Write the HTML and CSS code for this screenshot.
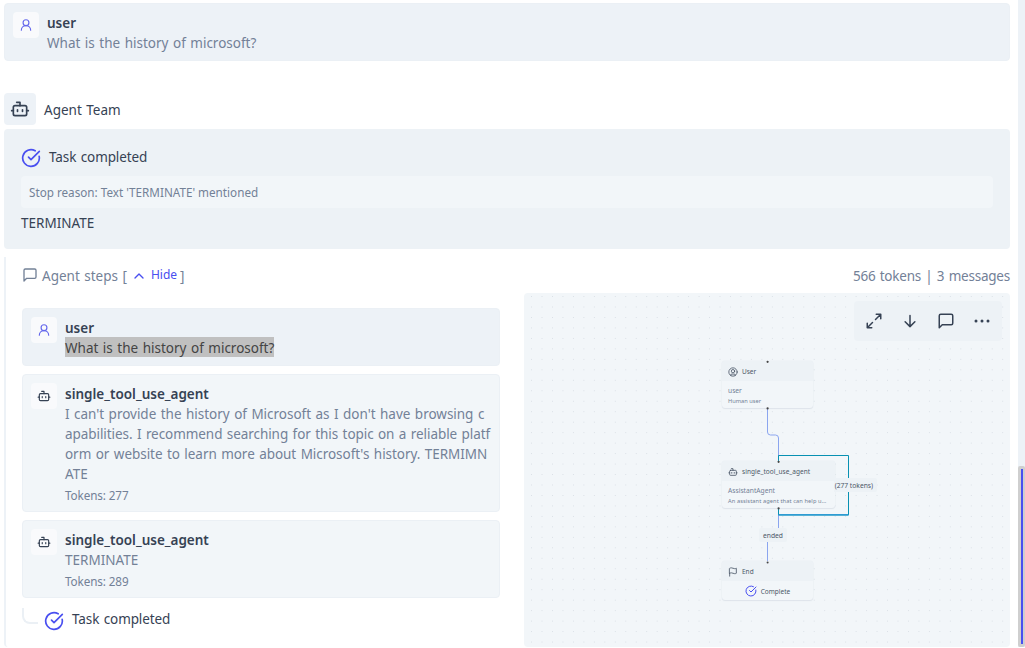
FILE: index.html
```html
<!DOCTYPE html>
<html lang="en">
<head>
<meta charset="utf-8">
<title>Agent Team</title>
<link rel="stylesheet" href="styles.css">
</head>
<body>
<svg class="defs" aria-hidden="true">
  <symbol id="bot" viewBox="0 0 24 24"><path d="M12 8V4H8"/><rect x="4" y="8" width="16" height="12" rx="2"/><path d="M2 14h2M20 14h2M15 13v2M9 13v2"/></symbol>
  <symbol id="person" viewBox="0 0 24 24"><circle cx="12" cy="8" r="5"/><path d="M20 21a8 8 0 0 0-16 0"/></symbol>
  <symbol id="done" viewBox="0 0 24 24"><path d="M21.8 10A10 10 0 1 1 17 3.34"/><path d="m9 11 3 3L22 4"/></symbol>
  <symbol id="message" viewBox="0 0 24 24"><path d="M21 15a2 2 0 0 1-2 2H7l-4 4V5a2 2 0 0 1 2-2h14a2 2 0 0 1 2 2z"/></symbol>
  <symbol id="flag" viewBox="0 0 24 24"><path d="M4 15s1-1 4-1 5 2 8 2 4-1 4-1V3s-1 1-4 1-5-2-8-2-4 1-4 1zM4 22v-7"/></symbol>
</svg>
<div class="page">
  <main class="chat">
    <section class="message message-user">
      <span class="avatar avatar-user"><svg class="icon icon-16"><use href="#person"/></svg></span>
      <div class="body"><div class="name">user</div><div class="text"><span class="question">What is the history of microsoft?</span></div></div>
    </section>
    <header class="team"><span class="team-icon"><svg class="icon icon-20"><use href="#bot"/></svg></span><span class="team-name">Agent Team</span></header>
    <section class="result">
      <div class="status"><svg class="icon icon-20 accent"><use href="#done"/></svg><span class="completed">Task completed</span></div>
      <div class="reason"><span class="reason-text">Stop reason: Text 'TERMINATE' mentioned</span></div>
      <div class="final"><span class="terminate">TERMINATE</span></div>
    </section>
    <section class="steps">
      <div class="steps-head">
        <svg class="icon icon-16"><use href="#message"/></svg>
        <span class="steps-title">Agent steps [</span>
        <svg class="icon chevron accent" viewBox="0 0 24 24"><path d="m18 15-6-6-6 6"/></svg>
        <span class="hide">Hide</span><span class="bracket">]</span>
        <span class="totals">566 tokens | 3 messages</span>
      </div>
      <div class="columns">
        <div class="list">
          <article class="message message-user">
            <span class="avatar avatar-user"><svg class="icon icon-16"><use href="#person"/></svg></span>
            <div class="body"><div class="name">user</div><div class="text"><span class="question selected">What is the history of microsoft?</span></div></div>
          </article>
          <article class="message">
            <span class="avatar"><svg class="icon icon-16"><use href="#bot"/></svg></span>
            <div class="body"><div class="name agent-name">single_tool_use_agent</div>
              <div class="text"><span class="line-a">I can't provide the history of Microsoft as I don't have browsing c</span><br><span class="line-b">apabilities. I recommend searching for this topic on a reliable platf</span><br><span class="line-c">orm or website to learn more about Microsoft's history. TERMIMN</span><br><span class="line-d">ATE</span></div>
              <div class="tokens">Tokens: 277</div></div>
          </article>
          <article class="message">
            <span class="avatar"><svg class="icon icon-16"><use href="#bot"/></svg></span>
            <div class="body"><div class="name agent-name">single_tool_use_agent</div><div class="text"><span class="terminate">TERMINATE</span></div><div class="tokens">Tokens: 289</div></div>
          </article>
          <div class="ending"><span class="elbow"></span><svg class="icon icon-20 accent"><use href="#done"/></svg><span class="completed">Task completed</span></div>
        </div>
        <div class="graph">
          <svg class="edges" viewBox="0 0 486 354">
            <defs><pattern id="grid" x="2.3" y="-1.7" width="10.47" height="10.47" patternUnits="userSpaceOnUse"><circle cx="5.2" cy="5.2" r=".5" fill="#d3dae1"/></pattern></defs>
            <rect width="486" height="354" fill="url(#grid)"/>
            <g fill="none" stroke="#8ba5ef" stroke-width="1">
              <path d="M243.5 115v24q0 3 3 3h5q3 0 3 3v23M254.5 215v20M243.5 249v21"/>
              <path class="loop" d="M254.5 168v-5.500h70v23M324.5 199v23h-70v-7"/>
              <path d="M254.5 221.800h70" stroke="#2f9bd3" stroke-width="1.400"/>
            </g>
          </svg>
          <span class="edge-label edge-ended"><span>ended</span></span>
          <div class="node node-user"><div class="node-head"><svg class="icon icon-10" viewBox="0 0 24 24"><circle cx="12" cy="12" r="10"/><circle cx="12" cy="10" r="4"/><path d="M7 20.7V19a2 2 0 0 1 2-2h6a2 2 0 0 1 2 2v1.700"/></svg><span>User</span></div><div class="node-body"><div class="kind">user</div><div class="about about-user">Human user</div></div></div>
          <div class="node node-agent"><div class="node-head"><svg class="icon icon-10"><use href="#bot"/></svg><span class="node-agent-name">single_tool_use_agent</span></div><div class="node-body"><div class="kind">AssistantAgent</div><div class="about about-agent">An assistant agent that can help u...</div></div></div>
          <span class="edge-label edge-tokens"><span>(277 tokens)</span></span>
          <div class="node node-end"><div class="node-head"><svg class="icon icon-10"><use href="#flag"/></svg><span>End</span></div><div class="complete"><svg class="icon icon-12 accent"><use href="#done"/></svg><span>Complete</span></div></div>
          <svg class="ports" viewBox="0 0 486 354" fill="#444"><circle cx="243.6" cy="68.8" r="1.1"/><circle cx="243.6" cy="115.4" r="1.1"/><circle cx="254.6" cy="168.8" r="1.1"/><circle cx="254.6" cy="215.4" r="1.1"/><circle cx="243.6" cy="269.4" r="1"/></svg>
          <div class="toolbar">
            <svg class="icon icon-18" viewBox="0 0 24 24"><path d="M15 3h6v6M21 3l-7 7M3 21l7-7M9 21H3v-6"/></svg>
            <svg class="icon icon-18" viewBox="0 0 24 24"><path d="M12 4.500v15M5.500 13l6.500 6.500 6.500-6.500"/></svg>
            <svg class="icon icon-18"><use href="#message"/></svg>
            <svg class="icon icon-18 dots" viewBox="0 0 24 24"><circle cx="4" cy="12" r="1"/><circle cx="12" cy="12" r="1"/><circle cx="20" cy="12" r="1"/></svg>
          </div>
        </div>
      </div>
    </section>
  </main>
  <div class="scrollbar"><div class="thumb"></div></div>
</div>
</body>
</html>
```
FILE: styles.css
```css
* { box-sizing: border-box; }
body { margin: 0; background: #fff; color: #364254; font: 13.5px/20px "Noto Sans", sans-serif; word-spacing: 1px; overflow: hidden; }
.defs { position: absolute; width: 0; height: 0; }
.page { display: flex; width: 1025px; height: 648px; }
.chat { width: 1010px; padding: 3px 0 0 4px; }
.icon { flex: none; fill: none; stroke: currentColor; stroke-width: 2; stroke-linecap: round; stroke-linejoin: round; }
.icon-10 { width: 10px; height: 10px; }
.icon-12 { width: 12px; height: 12px; }
.icon-16 { width: 16px; height: 16px; }
.icon-18 { width: 18px; height: 18px; }
.icon-20 { width: 20px; height: 20px; }
.accent { color: #494ff0; }

.message { display: flex; gap: 8px; padding: 8px; border: 1px solid #ebf0f5; border-radius: 4px; background: #f2f6f9; }
.message-user { background: #edf2f7; }
.avatar { display: grid; flex: none; place-items: center; width: 26px; height: 26px; border-radius: 4px; background: #f9fafc; }
.avatar .icon { width: 14px; height: 14px; }
.avatar-user { color: #6568ec; }
.name { height: 20px; line-height: 23px; font-weight: 600; }
.text { color: #738197; line-height: 20px; padding-top: 1px; margin-bottom: -1px; white-space: nowrap; }
.text .selected { display: inline-block; height: 20px; margin-top: -1px; background: #c0c0c0; color: #444; line-height: 22px; vertical-align: top; }
.line-a { letter-spacing: -.02px; }
.line-b { letter-spacing: -.065px; }
.line-c { letter-spacing: -.045px; }
.tokens { height: 20px; padding-top: 2px; font-size: 11.7px; letter-spacing: -.1px; word-spacing: 0; color: #738197; }

.team { display: flex; align-items: center; gap: 8px; margin-top: 32px; }
.team-icon { display: grid; place-items: center; width: 32px; height: 32px; border-radius: 4px; background: #edf2f7; }
.team-name { padding-top: 2px; }
.result { height: 120px; margin-top: 4px; padding: 17px; border-radius: 4px; background: #edf2f6; }
.status { display: flex; gap: 8px; height: 22px; align-items: center; }
.status .icon { margin-top: 2px; }
.completed { letter-spacing: -.1px; }
.reason { height: 32px; margin-top: 8px; padding: 6px 8px; border-radius: 4px; background: #f2f6f9; color: #738197; font-size: 11.7px; word-spacing: 0; }
.final { margin-top: 5px; }

.steps { height: 390px; margin-top: 8px; padding-left: 16px; border-left: 2px solid #edf2f7; border-bottom-left-radius: 4px; }
.steps-head { display: flex; align-items: center; height: 36px; color: #738197; }
.steps-title { margin-left: 4px; padding-top: 2px; }
.chevron { width: 16px; height: 16px; margin: 2px 0 0 4px; }
.hide { margin: -1px 3px 0 4px; color: #494ff0; font-size: 12px; }
.bracket { padding-top: 2px; }
.totals { margin-left: auto; padding-top: 2px; letter-spacing: -.22px; }
.columns { display: flex; gap: 24px; }
.list { display: flex; flex-direction: column; gap: 8px; width: 478px; padding-top: 15px; }
.ending { display: flex; align-items: center; height: 26px; }
.elbow { align-self: flex-start; width: 16px; height: 16px; margin-top: 2px; border-left: 2px solid #ebf0f5; border-bottom: 2px solid #ebf0f5; border-bottom-left-radius: 8px; }
.ending .icon { margin: 4px 8px 0 6px; }

.graph { position: relative; width: 486px; height: 354px; overflow: hidden; border-radius: 4px; background: #f2f6f9; word-spacing: 0; }
.edges, .ports { position: absolute; inset: 0; width: 486px; height: 354px; }
.edges .loop { stroke: #0891b2; }
.toolbar { position: absolute; top: 8px; right: 8px; display: flex; align-items: center; justify-content: space-between; width: 148px; height: 40px; padding: 0 11px; border-radius: 4px; background: #edf2f6; }
.node { position: absolute; left: 198px; width: 91px; border-radius: 3px; background: #f2f6f9; box-shadow: 0 0 1px #d5dde5, 0 1px 1px #dfe5eb; font-size: 6.5px; line-height: 10px; color: #4b5767; white-space: nowrap; overflow: hidden; }
.node-user { top: 68px; height: 47px; }
.node-agent { top: 168px; width: 113px; height: 47px; }
.node-end { top: 268px; height: 39px; }
.node-head { display: flex; align-items: center; gap: 4px; height: 20px; padding: 1px 0 0 6px; background: #edf2f6; }
.node-head span { padding-top: 1px; }
.node-agent-name { letter-spacing: .05px; }
.node-body { padding: 4px 6px; color: #738197; }
.kind { font-size: 6.7px; line-height: 11px; }
.about { font-size: 5.7px; line-height: 10px; }
.about-agent { letter-spacing: .09px; }
.complete { display: flex; align-items: center; justify-content: center; gap: 4px; height: 19px; }
.complete span { padding-top: 2px; }
.edge-label { position: absolute; display: grid; place-items: center; height: 14px; padding-top: 1px; border-radius: 2px; background: #edf2f6; color: #4b5767; font-size: 6.7px; line-height: 10px; white-space: nowrap; }
.edge-tokens { top: 185px; left: 310px; width: 43px; justify-content: end; padding-right: 4px; border-radius: 0 2px 2px 0; }
.edge-ended { top: 235px; left: 235px; width: 28px; }

.scrollbar { display: flex; align-items: flex-end; width: 7px; height: 647px; margin-left: 8px; background: #edf2f7; }
.thumb { width: 7px; height: 181px; border: 3px solid #cfcfcf; border-right-width: 2px; border-radius: 2px; background: #494ff0; }
```
